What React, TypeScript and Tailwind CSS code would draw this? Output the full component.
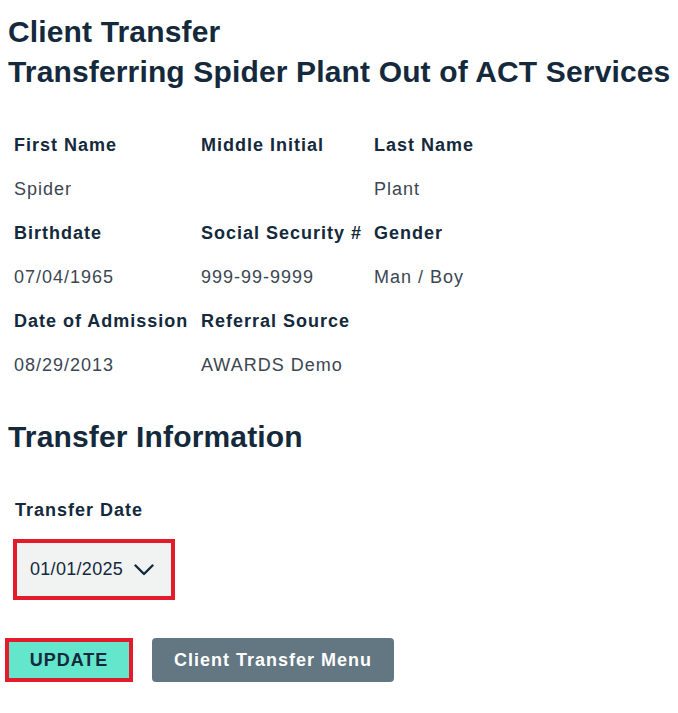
import React from 'react';

const fields = [
  [
    { label: 'First Name', value: 'Spider' },
    { label: 'Middle Initial', value: '' },
    { label: 'Last Name', value: 'Plant' },
  ],
  [
    { label: 'Birthdate', value: '07/04/1965' },
    { label: 'Social Security #', value: '999-99-9999' },
    { label: 'Gender', value: 'Man / Boy' },
  ],
  [
    { label: 'Date of Admission', value: '08/29/2013' },
    { label: 'Referral Source', value: 'AWARDS Demo' },
    { label: '', value: '' },
  ],
];

const App: React.FC = () => {
  return (
    <div className="min-h-[713px] bg-white pt-[12px] font-['Liberation_Sans',Arial,sans-serif] text-[#14293c]">
      {/* Page title */}
      <h1 className="pl-[8px] text-[30px] font-bold leading-[40px] tracking-[0.15px]">
        Client Transfer
        <br />
        Transferring Spider Plant Out of ACT Services
      </h1>

      {/* Client details */}
      <div className="mt-[31px] pl-[14px] text-[18px] tracking-[1px]">
        {fields.map((row, i) => (
          <React.Fragment key={i}>
            <div className="grid grid-cols-[187px_173px_1fr]">
              {row.map((f, j) => (
                <div key={j} className="flex h-[44px] items-center font-bold text-[#14293c]">
                  {f.label}
                </div>
              ))}
            </div>
            <div className="grid grid-cols-[187px_173px_1fr]">
              {row.map((f, j) => (
                <div key={j} className="flex h-[44px] items-center text-[#3b4652]">
                  {f.value}
                </div>
              ))}
            </div>
          </React.Fragment>
        ))}
      </div>

      <h2 className="mt-[30px] pl-[8px] text-[30px] font-bold leading-[40px] tracking-[0.15px]">
        Transfer Information
      </h2>

      <div className="mt-[41px] pl-[15px] text-[18px] font-bold leading-[24px] tracking-[1px]">
        Transfer Date
      </div>

      {/* Date selector */}
      <div className="mt-[17px] pl-[13px]">
        <div className="flex h-[61px] w-[162px] items-center justify-between border-4 border-[#e41b2a] bg-[#f1f3f3] pl-[13px] pr-[17px]">
          <span className="text-[18px] tracking-[0.3px] text-[#14293c]">01/01/2025</span>
          <svg width="20" height="12" viewBox="0 0 20 12" fill="none">
            <path d="M1.5 1.5 L10 10 L18.5 1.5" stroke="#14293c" strokeWidth="2.4" strokeLinecap="round" strokeLinejoin="round" />
          </svg>
        </div>
      </div>

      {/* Actions */}
      <div className="mt-[38px] flex items-center gap-[19px] pl-[5px] text-[18px] font-bold tracking-[1px]">
        <button className="flex h-[44px] w-[128px] items-center justify-center border-4 border-[#e41b2a] bg-[#63e6cb] text-[#14293c]">
          UPDATE
        </button>
        <button className="flex h-[44px] w-[242px] items-center justify-center rounded-[4px] bg-[#627782] text-white">
          Client Transfer Menu
        </button>
      </div>
    </div>
  );
};

export default App;
